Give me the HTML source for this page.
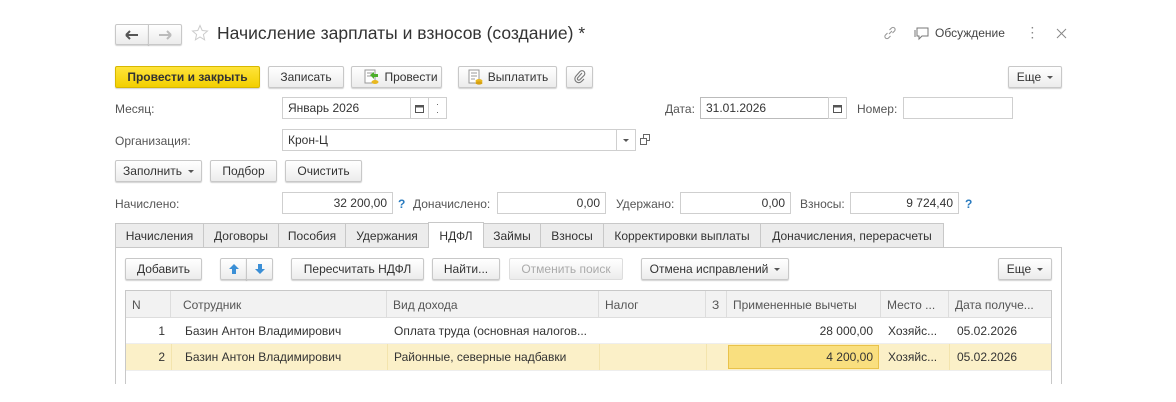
<!DOCTYPE html>
<html><head><meta charset="utf-8">
<style>
*{box-sizing:border-box;margin:0;padding:0}
body{width:1176px;height:402px;background:#fff;font-family:"Liberation Sans",sans-serif;font-size:12px;color:#333;position:relative;overflow:hidden}
.a{position:absolute}
.btn{position:absolute;height:22px;border:1px solid #c8c8c8;border-radius:2px;background:linear-gradient(#fff,#ececec);box-shadow:0 1px 1px rgba(0,0,0,.18);display:flex;align-items:center;justify-content:center;color:#333;white-space:nowrap}
.inp{position:absolute;height:22px;border:1px solid #cfcfcf;background:#fff;display:flex;align-items:center;padding:0 5px;white-space:nowrap;color:#333}
.r{justify-content:flex-end}
.lbl{position:absolute;color:#555;white-space:nowrap}
.tab{position:absolute;top:223px;height:24px;border:1px solid #c8c8c8;border-bottom:none;background:#ececec;display:flex;align-items:center;justify-content:center;color:#333;white-space:nowrap}
.cell{position:absolute;display:flex;align-items:center;padding:0 6px;white-space:nowrap;overflow:hidden}
.q{position:absolute;color:#2a7bbf;font-weight:bold}
.dd::after{content:"";display:inline-block;margin-left:6px;border-left:3px solid transparent;border-right:3px solid transparent;border-top:3px solid #555;vertical-align:middle}
</style></head><body>

<div class="btn" style="left:115px;top:24px;width:34px;height:21px;border-radius:2px 0 0 2px"><svg width="14" height="10"><path d="M1 5H13M1 5L5 1M1 5L5 9" stroke="#555" stroke-width="2" fill="none"/></svg></div>
<div class="btn" style="left:148px;top:24px;width:34px;height:21px;border-radius:0 2px 2px 0"><svg width="14" height="10"><path d="M1 5H13M13 5L9 1M13 5L9 9" stroke="#bbb" stroke-width="2" fill="none"/></svg></div>
<svg class="a" style="left:191px;top:24px" width="18" height="18"><path d="M9 1.5L11.2 6.5L16.5 7L12.4 10.5L13.6 15.8L9 13L4.4 15.8L5.6 10.5L1.5 7L6.8 6.5Z" fill="none" stroke="#ccc" stroke-width="1"/></svg>
<div class="a" style="left:217px;top:23px;font-size:17.5px;color:#333">Начисление зарплаты и взносов (создание) *</div>

<svg class="a" style="left:882px;top:25px" width="16" height="16"><path d="M7 9L10 6M5.5 8L3.5 10a2 2 0 0 0 3 3L8.5 11M10.5 8l2-2a2 2 0 0 0-3-3L7.5 5" stroke="#999" fill="none" stroke-width="1.1"/></svg>
<svg class="a" style="left:913px;top:25px" width="18" height="16"><path d="M4 3h11v8H9l-3 3v-3H4z" fill="none" stroke="#777"/><path d="M2 5v7" stroke="#777"/></svg>
<div class="a" style="left:935px;top:26px;color:#444">Обсуждение</div>
<div class="a" style="left:1031px;top:26px;color:#888;font-weight:bold;line-height:5px;font-size:10px">·<br>·<br>·</div>
<svg class="a" style="left:1056px;top:28px" width="11" height="11"><path d="M1 1L10 10M10 1L1 10" stroke="#888"/></svg>

<div class="btn" style="left:115px;top:66px;width:145px;background:linear-gradient(#ffe43a,#f2cf00);border-color:#d7b800;font-weight:bold;color:#333">Провести и закрыть</div>
<div class="btn" style="left:268px;top:66px;width:76px">Записать</div>
<div class="btn" style="left:351px;top:66px;width:91px;padding-left:8px"><svg width="16" height="16" style="margin-right:5px"><rect x="2" y="1" width="10" height="13" fill="#fff" stroke="#999"/><path d="M4 4h6M4 7h5" stroke="#999"/><path d="M7 6l4-3v2h4v3h-4v2z" fill="#4caf2a"/><ellipse cx="12" cy="13" rx="3.5" ry="2" fill="#e8b820"/></svg>Провести</div>
<div class="btn" style="left:458px;top:66px;width:99px"><svg width="16" height="16" style="margin-right:5px"><rect x="2" y="1" width="10" height="13" fill="#fff" stroke="#999"/><path d="M4 4h6M4 7h6M4 10h4" stroke="#999"/><ellipse cx="12" cy="12" rx="3.5" ry="2" fill="#e8b820"/><ellipse cx="12" cy="14" rx="3.5" ry="1.6" fill="#d6a010"/></svg>Выплатить</div>
<div class="btn" style="left:566px;top:66px;width:27px"><svg width="12" height="14"><path d="M8 3L3.5 8a1.5 1.5 0 0 0 2 2L10 5.5a2.7 2.7 0 0 0-4-4L2 6a3.8 3.8 0 0 0 5.5 5.5L10 9" fill="none" stroke="#777" stroke-width="1.1"/></svg></div>
<div class="btn dd" style="left:1008px;top:66px;width:54px">Еще</div>

<div class="lbl" style="left:115px;top:102px">Месяц:</div>
<div class="inp" style="left:282px;top:97px;width:129px">Январь 2026</div>
<div class="inp" style="left:410px;top:97px;width:19px;justify-content:center;padding:0"><svg width="9" height="9"><rect x=".5" y="1.5" width="8" height="7" fill="none" stroke="#555"/><rect x=".5" y="1.5" width="8" height="2" fill="#555"/></svg></div>
<div class="inp" style="left:428px;top:97px;width:19px;padding:0;justify-content:center;font-size:9px;color:#555;line-height:8px;flex-direction:column">·<br>·</div>
<div class="lbl" style="left:665px;top:102px">Дата:</div>
<div class="inp" style="left:700px;top:97px;width:129px;border-color:#bbb">31.01.2026</div>
<div class="inp" style="left:828px;top:97px;width:19px;justify-content:center;padding:0"><svg width="9" height="9"><rect x=".5" y="1.5" width="8" height="7" fill="none" stroke="#555"/><rect x=".5" y="1.5" width="8" height="2" fill="#555"/></svg></div>
<div class="lbl" style="left:857px;top:102px">Номер:</div>
<div class="inp" style="left:903px;top:97px;width:110px"></div>

<div class="lbl" style="left:115px;top:134px">Организация:</div>
<div class="inp" style="left:282px;top:129px;width:335px">Крон-Ц</div>
<div class="inp" style="left:616px;top:129px;width:20px;justify-content:center;padding:0"><span style="border-left:3px solid transparent;border-right:3px solid transparent;border-top:3px solid #555"></span></div>
<div class="a" style="left:640px;top:134px;width:11px;height:11px"><svg width="11" height="11"><rect x="3.5" y=".5" width="6" height="6" fill="none" stroke="#666"/><rect x=".5" y="4.5" width="6" height="6" fill="#fff" stroke="#666"/></svg></div>

<div class="btn dd" style="left:115px;top:160px;width:87px">Заполнить</div>
<div class="btn" style="left:210px;top:160px;width:67px">Подбор</div>
<div class="btn" style="left:285px;top:160px;width:77px">Очистить</div>

<div class="lbl" style="left:115px;top:197px">Начислено:</div>
<div class="inp r" style="left:282px;top:192px;width:111px">32 200,00</div>
<div class="q" style="left:398px;top:197px">?</div>
<div class="lbl" style="left:413px;top:197px">Доначислено:</div>
<div class="inp r" style="left:497px;top:192px;width:109px">0,00</div>
<div class="lbl" style="left:616px;top:197px">Удержано:</div>
<div class="inp r" style="left:680px;top:192px;width:111px">0,00</div>
<div class="lbl" style="left:800px;top:197px">Взносы:</div>
<div class="inp r" style="left:850px;top:192px;width:109px">9 724,40</div>
<div class="q" style="left:965px;top:197px">?</div>

<div class="a" style="left:115px;top:247px;width:947px;height:140px;border:1px solid #c8c8c8;border-bottom:none"></div>
<div class="tab" style="left:115px;width:89px">Начисления</div>
<div class="tab" style="left:203px;width:76px">Договоры</div>
<div class="tab" style="left:278px;width:68px">Пособия</div>
<div class="tab" style="left:345px;width:84px">Удержания</div>
<div class="tab" style="left:428px;top:222px;height:26px;width:56px;background:#fff;z-index:2">НДФЛ</div>
<div class="tab" style="left:483px;width:58px">Займы</div>
<div class="tab" style="left:540px;width:64px">Взносы</div>
<div class="tab" style="left:603px;width:158px">Корректировки выплаты</div>
<div class="tab" style="left:760px;width:184px">Доначисления, перерасчеты</div>

<div class="btn" style="left:125px;top:258px;width:77px">Добавить</div>
<div class="btn" style="left:220px;top:258px;width:27px;border-radius:2px 0 0 2px"><svg width="12" height="12"><path d="M6 1L11 6H8V11H4V6H1Z" fill="#3b8fd6"/></svg></div>
<div class="btn" style="left:246px;top:258px;width:27px;border-radius:0 2px 2px 0"><svg width="12" height="12"><path d="M6 11L11 6H8V1H4V6H1Z" fill="#3b8fd6"/></svg></div>
<div class="btn" style="left:291px;top:258px;width:133px">Пересчитать НДФЛ</div>
<div class="btn" style="left:432px;top:258px;width:68px">Найти...</div>
<div class="btn" style="left:509px;top:258px;width:114px;color:#aaa;box-shadow:none;border-color:#ddd">Отменить поиск</div>
<div class="btn dd" style="left:641px;top:258px;width:148px">Отмена исправлений</div>
<div class="btn dd" style="left:998px;top:258px;width:54px">Еще</div>

<div class="a" style="left:125px;top:290px;width:927px;height:97px;border:1px solid #c8c8c8;border-bottom:none"></div>
<div class="a" style="left:126px;top:291px;width:925px;height:27px;background:#f2f2f2;border-bottom:1px solid #ddd"></div>
<div class="a" style="left:126px;top:344px;width:925px;height:26px;background:#fbf0c8"></div>
<div class="a" style="left:126px;top:343px;width:925px;height:1px;background:#eee"></div>
<div class="a" style="left:126px;top:370px;width:925px;height:1px;background:#eee"></div>
<div class="a" style="left:728px;top:345px;width:151px;height:24px;background:#f9df7f;border:1px solid #e9c24a"></div>

<div class="cell" style="left:126px;top:291px;width:45px;height:27px;border-right:1px solid #ddd;color:#555">N</div>
<div class="cell" style="left:171px;top:291px;width:216px;height:27px;border-right:1px solid #ddd;color:#555;padding-left:12px">Сотрудник</div>
<div class="cell" style="left:387px;top:291px;width:212px;height:27px;border-right:1px solid #ddd;color:#555">Вид дохода</div>
<div class="cell" style="left:599px;top:291px;width:107px;height:27px;border-right:1px solid #ddd;color:#555">Налог</div>
<div class="cell" style="left:706px;top:291px;width:21px;height:27px;border-right:1px solid #ddd;color:#555">З</div>
<div class="cell" style="left:727px;top:291px;width:154px;height:27px;border-right:1px solid #ddd;color:#555">Примененные вычеты</div>
<div class="cell" style="left:881px;top:291px;width:68px;height:27px;border-right:1px solid #ddd;color:#555">Место ...</div>
<div class="cell" style="left:949px;top:291px;width:102px;height:27px;color:#555">Дата получе...</div>

<div class="cell" style="left:126px;top:318px;width:45px;height:26px;justify-content:flex-end">1</div>
<div class="cell" style="left:179px;top:318px;width:208px;height:26px">Базин Антон Владимирович</div>
<div class="cell" style="left:388px;top:318px;width:211px;height:26px">Оплата труда (основная налогов...</div>
<div class="cell" style="left:727px;top:318px;width:152px;height:26px;justify-content:flex-end">28 000,00</div>
<div class="cell" style="left:882px;top:318px;width:67px;height:26px">Хозяйс...</div>
<div class="cell" style="left:951px;top:318px;width:100px;height:26px">05.02.2026</div>

<div class="a" style="left:171px;top:344px;width:1px;height:26px;background:#f3e4ad"></div>
<div class="a" style="left:387px;top:344px;width:1px;height:26px;background:#f3e4ad"></div>
<div class="a" style="left:599px;top:344px;width:1px;height:26px;background:#f3e4ad"></div>
<div class="a" style="left:706px;top:344px;width:1px;height:26px;background:#f3e4ad"></div>
<div class="a" style="left:949px;top:344px;width:1px;height:26px;background:#f3e4ad"></div>
<div class="cell" style="left:126px;top:344px;width:45px;height:26px;justify-content:flex-end">2</div>
<div class="cell" style="left:179px;top:344px;width:208px;height:26px">Базин Антон Владимирович</div>
<div class="cell" style="left:388px;top:344px;width:211px;height:26px">Районные, северные надбавки</div>
<div class="cell" style="left:727px;top:344px;width:152px;height:26px;justify-content:flex-end">4 200,00</div>
<div class="cell" style="left:882px;top:344px;width:67px;height:26px">Хозяйс...</div>
<div class="cell" style="left:951px;top:344px;width:100px;height:26px">05.02.2026</div>

<div class="a" style="left:0;top:384px;width:1176px;height:18px;background:#fff"></div>
</body></html>
